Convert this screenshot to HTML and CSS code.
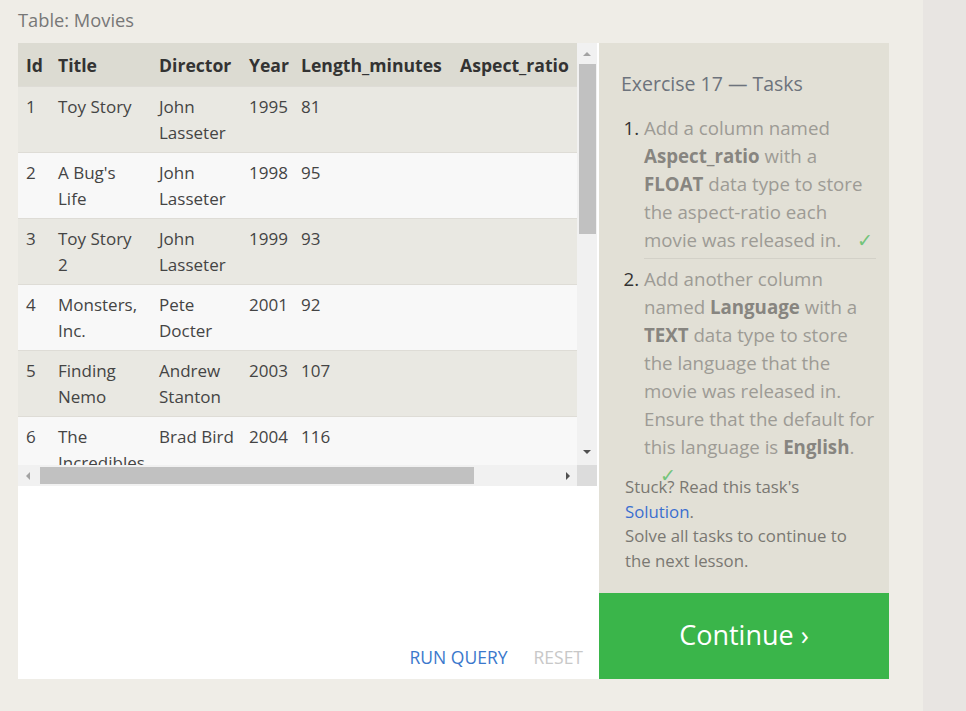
FILE: index.html
```html
<!DOCTYPE html>
<html>
<head>
<meta charset="utf-8">
<link rel="stylesheet" href="styles.css">
</head>
<body>
<div class="page">
  <main class="main">
    <div class="caption">Table: Movies</div>
    <div class="workspace">
      <section class="card">
        <div class="results">
          <div class="viewport">
            <table class="movies">
              <colgroup>
                <col class="c-id"><col class="c-title"><col class="c-dir"><col class="c-year"><col class="c-len"><col class="c-asp">
              </colgroup>
              <thead>
                <tr><th>Id</th><th>Title</th><th>Director</th><th>Year</th><th>Length_minutes</th><th>Aspect_ratio</th></tr>
              </thead>
              <tbody>
                <tr><td>1</td><td>Toy Story</td><td>John Lasseter</td><td>1995</td><td>81</td><td></td></tr>
                <tr><td>2</td><td>A Bug's Life</td><td>John Lasseter</td><td>1998</td><td>95</td><td></td></tr>
                <tr><td>3</td><td>Toy Story 2</td><td>John Lasseter</td><td>1999</td><td>93</td><td></td></tr>
                <tr><td>4</td><td>Monsters, Inc.</td><td>Pete Docter</td><td>2001</td><td>92</td><td></td></tr>
                <tr><td>5</td><td>Finding Nemo</td><td>Andrew Stanton</td><td>2003</td><td>107</td><td></td></tr>
                <tr><td>6</td><td>The Incredibles</td><td class="nw">Brad Bird</td><td>2004</td><td>116</td><td></td></tr>
              </tbody>
            </table>
          </div>
          <div class="vbar">
            <span class="arrow up"></span>
            <span class="vthumb"></span>
            <span class="arrow down"></span>
          </div>
          <div class="hbar">
            <span class="arrow left"></span>
            <span class="hthumb"></span>
            <span class="arrow right"></span>
          </div>
          <div class="corner"></div>
        </div>
        <div class="actions">
          <span class="run">RUN QUERY</span>
          <span class="reset">RESET</span>
        </div>
      </section>
      <aside class="side">
        <div class="tasks">
          <h2 class="tasks-title">Exercise 17 — Tasks</h2>
          <ol class="task-list">
            <li>Add a column named <b>Aspect_ratio</b> with a <b>FLOAT</b> data type to store the aspect-ratio each movie was released in.&#8203;<span class="check">✓</span></li>
            <li>Add another column named <b>Language</b> with a <b>TEXT</b> data type to store the language that the movie was released in. Ensure that the default for this language is <b>English</b>.&#8203;<span class="check">✓</span></li>
          </ol>
          <p class="help">Stuck? Read this task's <a class="link">Solution</a>.<br>Solve all tasks to continue to the next lesson.</p>
        </div>
        <div class="continue">Continue ›</div>
      </aside>
    </div>
  </main>
  <div class="strip"></div>
</div>
</body>
</html>
```

FILE: styles.css
```css
html, body {
  margin: 0;
  padding: 0;
}
body {
  background: #efede7;
  font-family: "Open Sans", "Noto Sans", sans-serif;
  color: #333;
}
.page {
  display: flex;
  height: 711px;
}
.main {
  width: 923px;
  padding: 0 0 0 18px;
  box-sizing: border-box;
}
.strip {
  flex: 1;
  background: #e8e5e2;
}
.caption {
  font-size: 18.3px;
  line-height: 24px;
  color: #777;
  padding-top: 8px;
  height: 43px;
  box-sizing: border-box;
}
.workspace {
  display: flex;
  width: 871px;
  height: 636px;
}
.card {
  width: 581px;
  background: #fff;
  display: flex;
  flex-direction: column;
}
.results {
  display: grid;
  grid-template-columns: 559px 20px;
  grid-template-rows: 422px 21px;
  height: 443px;
}
.viewport {
  overflow: hidden;
}
.movies {
  border-collapse: collapse;
  table-layout: fixed;
  width: 690px;
  font-size: 17px;
  line-height: 26px;
}
.c-id { width: 32px; }
.c-title { width: 101px; }
.c-dir { width: 90px; }
.c-year { width: 52px; }
.c-len { width: 159px; }
.c-asp { width: 256px; }
.movies th {
  background: #dcdbd2;
  text-align: left;
  font-weight: 700;
  font-size: 17.6px;
  color: #333;
  padding: 9px 8px 8px;
  white-space: nowrap;
}
.movies td {
  padding: 7px 8px 6px;
  vertical-align: top;
  color: #444;
  border-top: 1px solid #dedcd6;
}
.movies tbody tr:nth-child(odd) td { background: #e9e8e2; }
.movies tbody tr:nth-child(even) td { background: #f8f8f8; }
.movies td.nw { white-space: nowrap; }
.vbar {
  background: #f1f1f1;
  display: flex;
  flex-direction: column;
  align-items: center;
}
.vthumb {
  width: 17px;
  height: 170px;
  background: #c1c1c1;
}
.vbar .arrow.up { margin: 9px 0 8px; }
.vbar .arrow.down { margin-top: auto; margin-bottom: 11px; }
.hbar {
  background: #f1f1f1;
  display: flex;
  align-items: center;
  padding: 0 7px 0 8px;
}
.hthumb {
  height: 17px;
  width: 434px;
  background: #c1c1c1;
  margin-left: 10px;
}
.hbar .arrow.right { margin-left: auto; }
.corner {
  background: #dcdcdc;
}
.arrow {
  width: 0;
  height: 0;
  display: block;
}
.arrow.up {
  border-left: 4px solid transparent;
  border-right: 4px solid transparent;
  border-bottom: 4px solid #a3a3a3;
}
.arrow.down {
  border-left: 4px solid transparent;
  border-right: 4px solid transparent;
  border-top: 4px solid #505050;
}
.arrow.left {
  border-top: 4px solid transparent;
  border-bottom: 4px solid transparent;
  border-right: 4px solid #a3a3a3;
}
.arrow.right {
  border-top: 4px solid transparent;
  border-bottom: 4px solid transparent;
  border-left: 4px solid #505050;
}
.actions {
  margin-top: auto;
  display: flex;
  justify-content: flex-end;
  gap: 26px;
  padding: 0 16px 10px 0;
  font-size: 17.5px;
  line-height: 24px;
}
.run { color: #3b78cc; }
.reset { color: #c8c8c8; }
.side {
  width: 290px;
  display: flex;
  flex-direction: column;
}
.tasks {
  flex: 1;
  background: #e2e0d6;
  padding: 27px 13px 0 22px;
}
.tasks-title {
  margin: 0;
  font-size: 19.5px;
  line-height: 28px;
  font-weight: 400;
  color: #6d737c;
}
.task-list {
  margin: 15px 0 0;
  padding: 0 0 0 23px;
  font-size: 18.7px;
  line-height: 28px;
  color: #9d9b95;
}
.task-list li {
  padding: 1px 0 5px;
}
.task-list li::marker {
  color: #333;
}
.task-list li:first-child {
  border-bottom: 1px solid #d3d1c8;
  padding-bottom: 4px;
  margin-bottom: 5px;
}
.task-list li:last-child {
  margin-bottom: -19px;
}
.task-list b {
  color: #878580;
}
.check {
  color: #73c47a;
  margin-left: 16px;
  font-size: 19px;
}
.help {
  margin: 0;
  padding: 0 16px 0 4px;
  font-size: 16.8px;
  line-height: 24.5px;
  color: #7a7872;
}
.link { color: #3b6fd0; }
.continue {
  height: 86px;
  background: #3ab54a;
  color: #fff;
  font-size: 27px;
  display: flex;
  align-items: center;
  justify-content: center;
  padding-bottom: 3px;
  box-sizing: border-box;
}
```
